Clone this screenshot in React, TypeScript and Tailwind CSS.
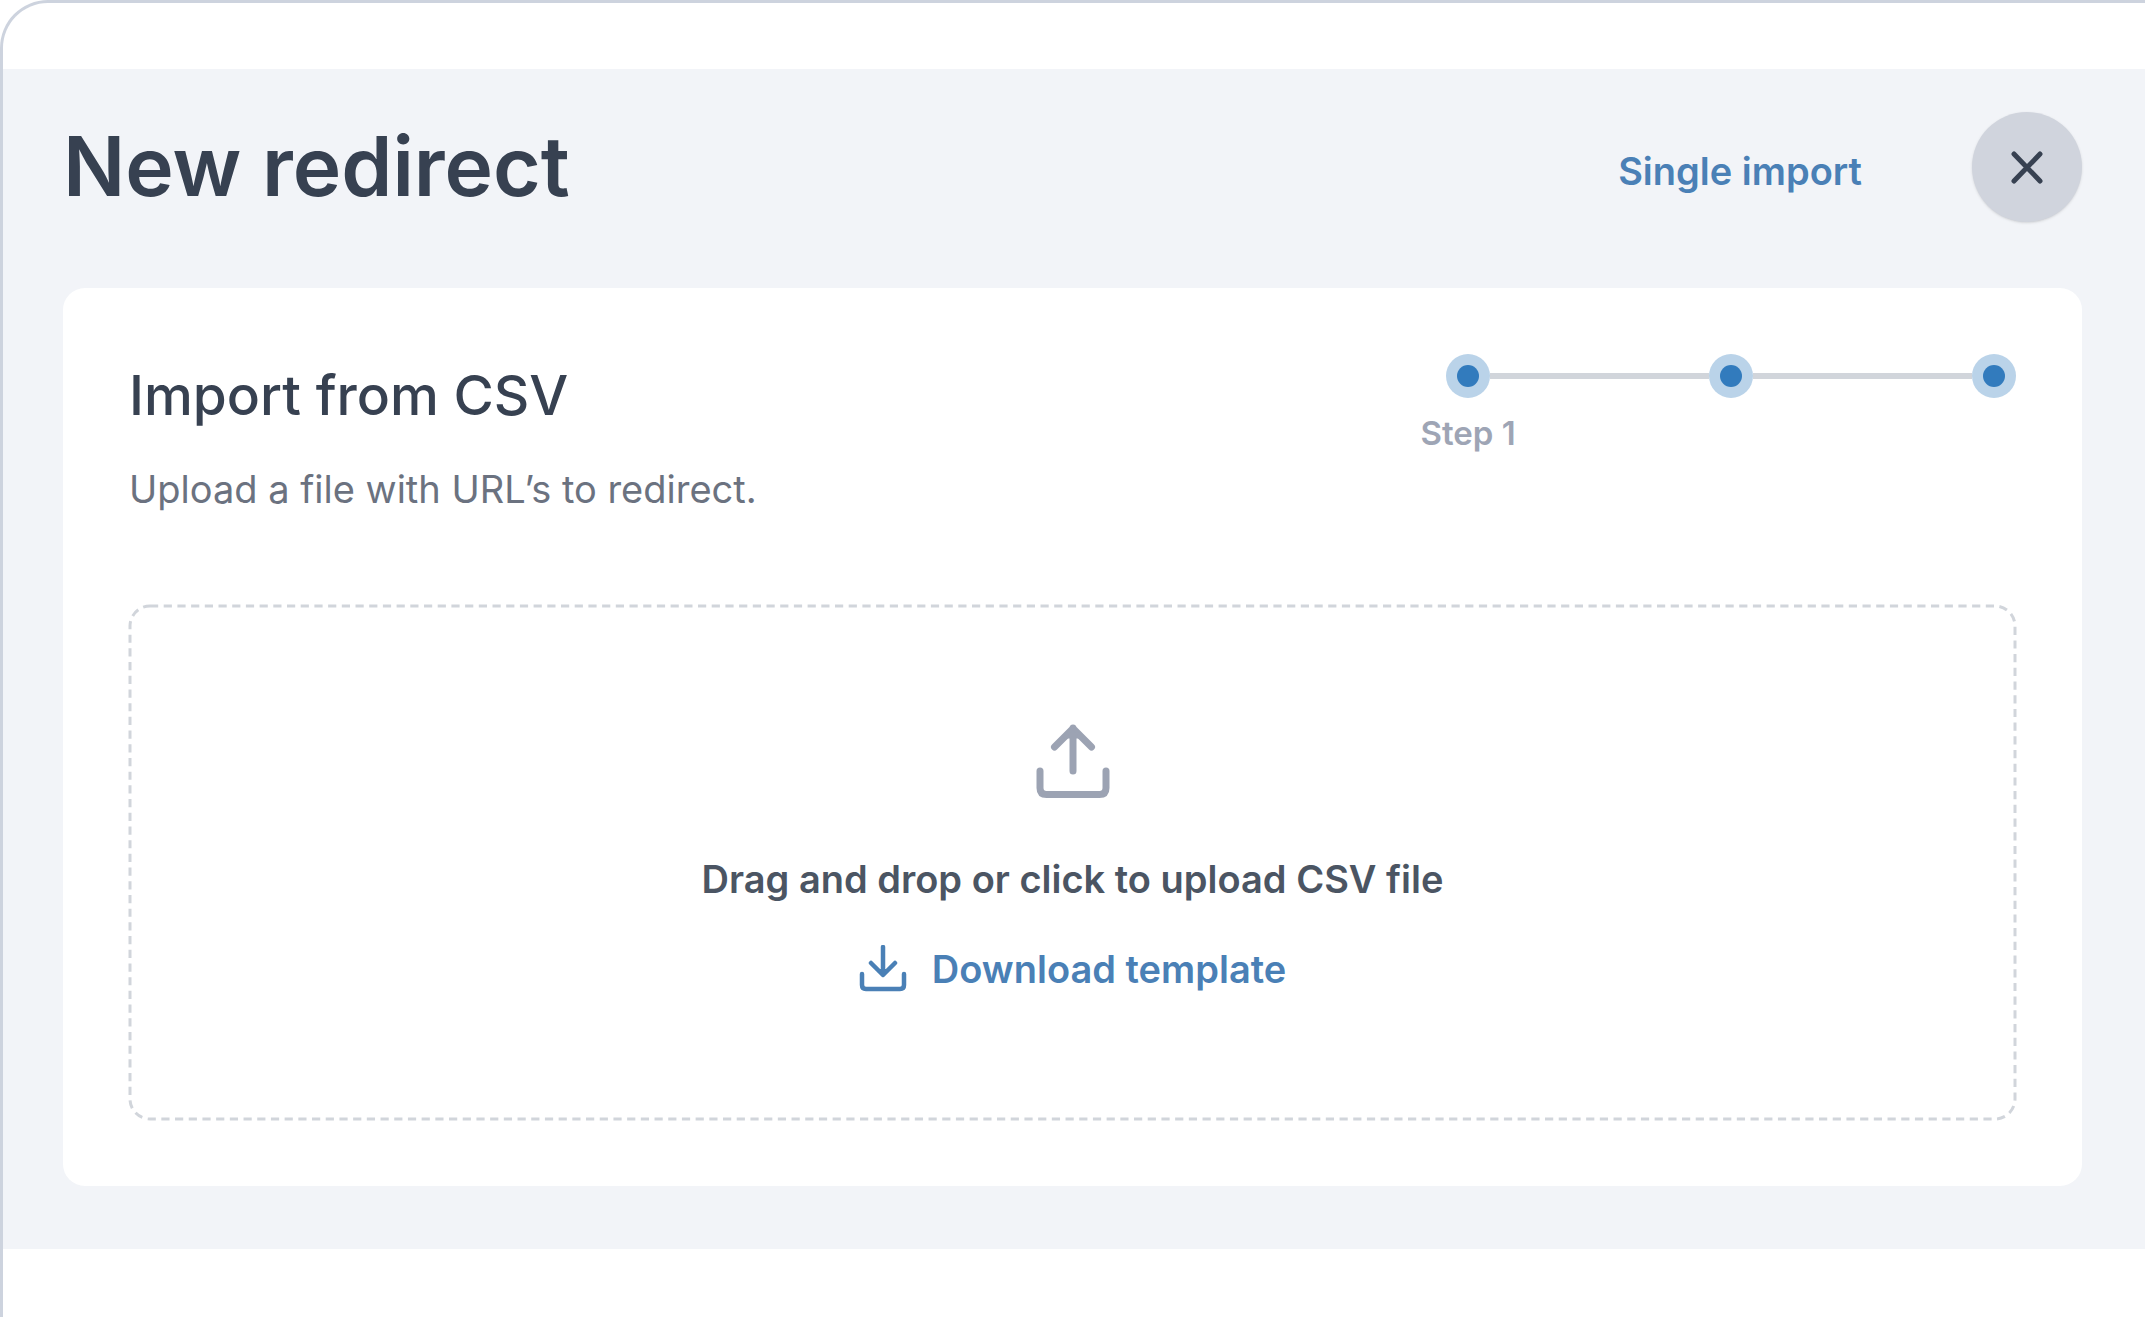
import React from 'react';

const STEPS = ['Step 1', 'Step 2', 'Step 3'];
const CURRENT_STEP = 0;

const CloseIcon = () => (
  <svg width="34" height="34" viewBox="0 0 34 34" fill="none" stroke="currentColor" strokeWidth="5" strokeLinecap="round" aria-hidden="true">
    <path d="M4 4 30 31M30 4 4 31" />
  </svg>
);

const UploadIcon = () => (
  <svg width="74" height="76" viewBox="0 0 74 76" fill="none" stroke="currentColor" strokeWidth="7" strokeLinecap="round" strokeLinejoin="round" aria-hidden="true">
    <path d="M37 48V5M18.500 24 37 5.500l18.500 18.500" />
    <path d="M37 5 29 14h16z" fill="currentColor" strokeWidth="3" />
    <path d="M4 48v17q0 6.500 6.500 6.500h53q6.500 0 6.500-6.500V48" />
  </svg>
);

const DownloadIcon = () => (
  <svg width="48" height="48" viewBox="0 0 48 48" fill="none" stroke="currentColor" strokeWidth="4.500" strokeLinecap="round" strokeLinejoin="round" aria-hidden="true">
    <path d="M24 2v27M12 18l12 12 12-12" />
    <path d="M24 31l-5-6h10z" fill="currentColor" strokeWidth="2" />
    <path d="M3 29v11q0 4 4 4h34q4 0 4-4V29" />
  </svg>
);

const Stepper = () => (
  <ol className="flex items-start">
    {STEPS.map((step, i) => (
      <li key={step} className="flex items-start">
        {i > 0 && <span className="mt-[19px] h-[6px] w-[219px] bg-[#d1d5db]" />}
        <div className="relative">
          <span className="flex size-[44px] items-center justify-center rounded-full bg-[#bad3e9]">
            <span className="size-[22px] rounded-full bg-[#327bbd]" />
          </span>
          {i === CURRENT_STEP && (
            <span className="absolute left-1/2 top-[57px] -translate-x-1/2 whitespace-nowrap text-[33px] leading-[44px] font-semibold text-[#9ea5b5]">
              {step}
            </span>
          )}
        </div>
      </li>
    ))}
  </ol>
);

const Dropzone = () => (
  <div className="relative flex flex-col items-center px-12 pt-[118px] pb-[124px]">
    {/* Wide dashes, which a plain dashed border can't give */}
    <div className="pointer-events-none absolute inset-px">
      <svg className="size-full overflow-visible" aria-hidden="true">
        <rect x="0" y="0" width="100%" height="100%" rx="20" fill="none" stroke="#d1d5db" strokeWidth="3" strokeDasharray="8.2 5.5" />
      </svg>
    </div>

    <label className="flex cursor-pointer flex-col items-center gap-[53px] text-[38px] leading-[54px] font-semibold text-[#4b5563]">
      <span className="text-[#9ca3b3]">
        <UploadIcon />
      </span>
      Drag and drop or click to upload CSV file
      <input type="file" accept=".csv" className="sr-only" />
    </label>

    <a href="#template" className="mt-9 flex items-center gap-[25px] text-[38px] leading-[54px] font-semibold text-[#4a80b6]">
      <DownloadIcon />
      Download template
    </a>
  </div>
);

export default function App() {
  return (
    <div className="min-h-screen rounded-tl-[48px] border-t-[3px] border-l-[3px] border-[#cdd3de] bg-white pt-[66px] font-['Inter',sans-serif]">
      <main className="bg-[#f2f4f8] pt-[43px] pr-[63px] pb-[63px] pl-[60px]">
        <header className="flex h-[110px] items-center justify-between">
          <h1 className="text-[82px] leading-[110px] font-semibold text-[#374151]">New redirect</h1>
          <div className="flex items-center gap-[110px]">
            <button type="button" className="pt-2 text-[38px] leading-[54px] font-semibold text-[#4a80b6]">
              Single import
            </button>
            <button
              type="button"
              aria-label="Close"
              className="flex size-[110px] items-center justify-center rounded-full bg-[#d0d4dd] text-[#374151] shadow-sm"
            >
              <CloseIcon />
            </button>
          </div>
        </header>

        <section className="mt-[66px] rounded-[22px] bg-white p-[66px]">
          <div className="flex items-start justify-between">
            <div>
              <h2 className="text-[55px] leading-[82px] font-medium text-[#374151]">Import from CSV</h2>
              <p className="mt-5 text-[38px] leading-[66px] text-[#6b7280]">Upload a file with URL’s to redirect.</p>
            </div>
            <Stepper />
          </div>

          <div className="mt-[83px]">
            <Dropzone />
          </div>
        </section>
      </main>
    </div>
  );
}
